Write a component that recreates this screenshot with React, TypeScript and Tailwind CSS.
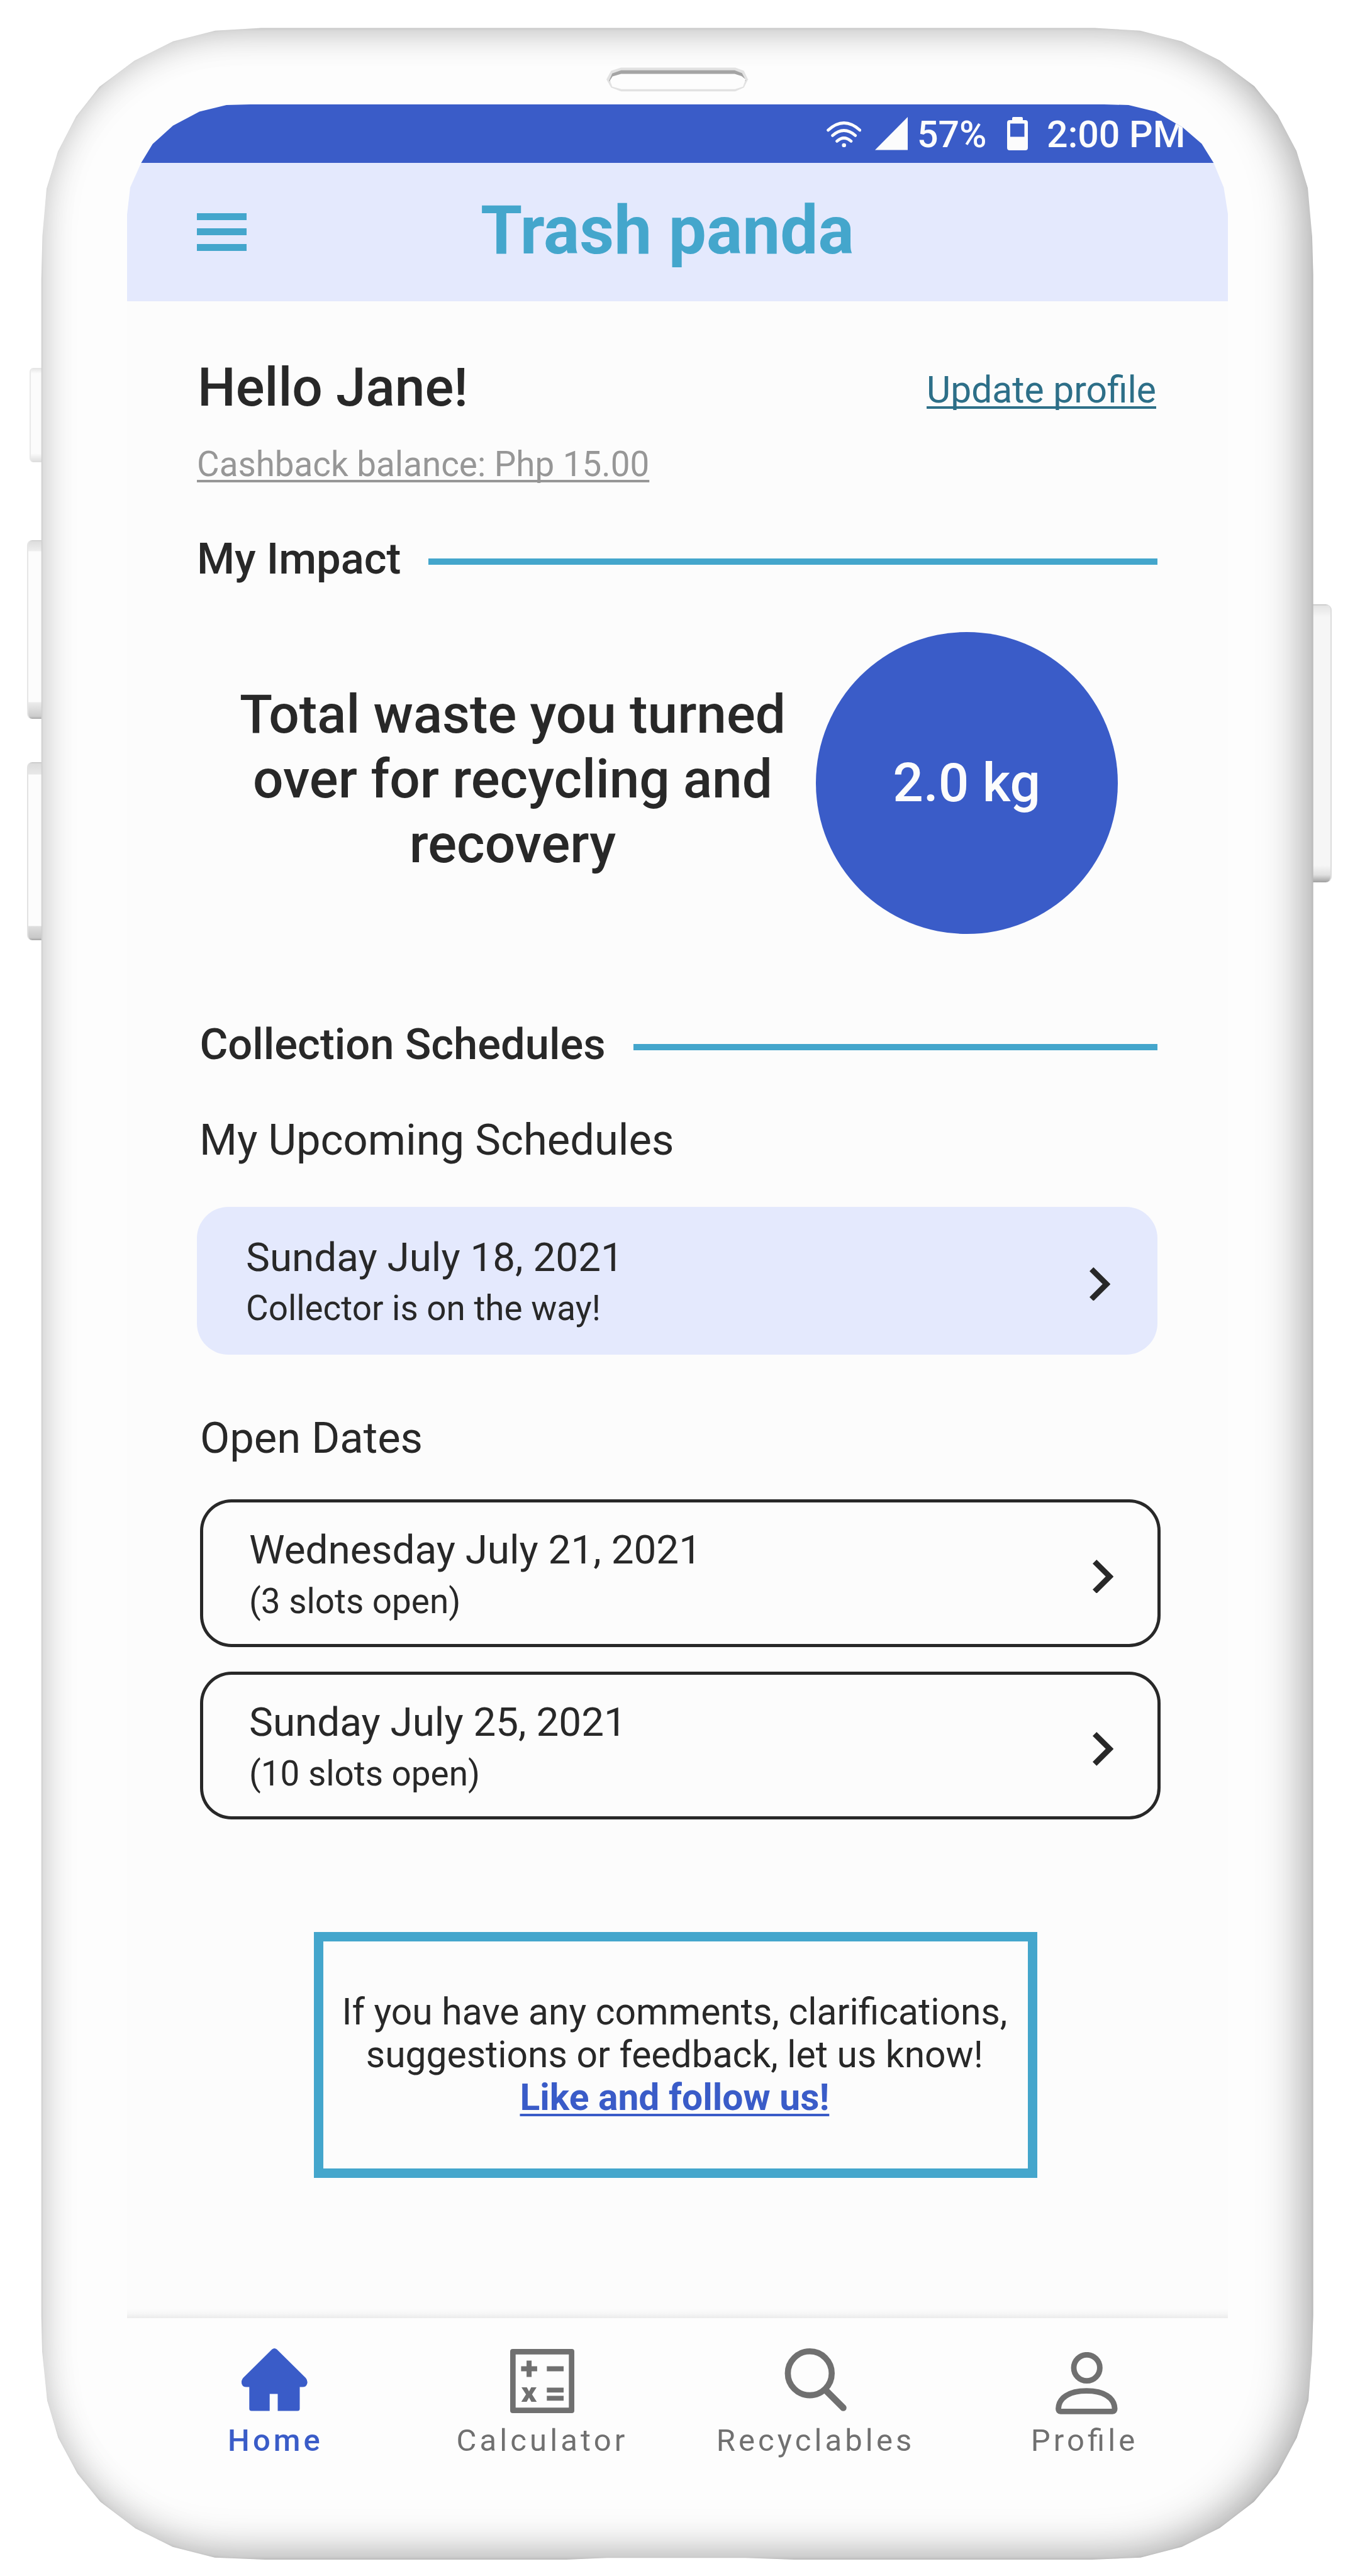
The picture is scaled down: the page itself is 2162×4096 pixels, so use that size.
import React from "react";

function Chevron() {
  return (
    <svg viewBox="542 577 143 230" className="mt-[95.7px] h-[53.7px] w-[33.4px] shrink-0 fill-[#282828]">
      <path d="M569 577 685 692 569 807 542 780 631 692 542 604Z" />
    </svg>
  );
}

function DateCard({ date, note, filled = false }: { date: string; note: string; filled?: boolean }) {
  return (
    <div
      className={
        "flex h-[235px] w-[1527px] items-start justify-between rounded-[50px] pr-[75px] pl-[78px] " +
        (filled ? "bg-[#e4e9fd]" : "ml-[5px] shadow-[inset_0_0_0_5px_#282828]")
      }
    >
      <div className="mt-[40px]">
        <div className="text-[63.8px] leading-[81.5px]">{date}</div>
        <div className="text-[54.8px] leading-[81.5px]">{note}</div>
      </div>
      <Chevron />
    </div>
  );
}

function SectionTitle({ children }: { children: string }) {
  return (
    <div className="flex items-start">
      <h2 className="text-[68.7px] leading-[70px] font-medium whitespace-nowrap">{children}</h2>
      <div className="mt-[34px] ml-[44px] h-[10px] grow bg-[#44a6cc]" />
    </div>
  );
}

function StatusBar() {
  return (
    <div className="flex h-[93px] items-start justify-end bg-[#3a5cc8] pr-[67.5px] text-[59.1px] leading-[60px] font-medium text-[#fcfcfc]">
      <svg viewBox="0 0 55.4 41.5" className="mt-[26.5px] h-[41.5px] w-[55.4px]" fill="none" stroke="currentColor" strokeWidth="4.6" strokeLinecap="round">
        <path d="M2.5 14Q27.6-9 53 14M9.5 22.5Q27.6 6.5 45.8 22.5M16.5 31.5Q27.6 21.5 39 31.5" />
        <circle cx="27.7" cy="38" r="3.3" fill="currentColor" stroke="none" />
      </svg>
      <svg viewBox="0 0 52 52.5" className="mt-[20.4px] ml-[22.4px] h-[52.5px] w-[52px] fill-current">
        <path d="M52 0V52.5H0Z" />
      </svg>
      <span className="mt-[18.4px] ml-[14.5px]">57%</span>
      <svg viewBox="0 0 33 53" className="mt-[20.4px] ml-[32.5px] h-[53px] w-[33px] fill-current" fillRule="evenodd">
        <path d="M8 2Q8 0 10 0H23Q25 0 25 2V5H29Q33 5 33 9V49Q33 53 29 53H4Q0 53 0 49V9Q0 5 4 5H8ZM5 10.5V31.5H27.5V10.5Z" />
      </svg>
      <span className="mt-[18.4px] ml-[30px] whitespace-nowrap">2:00 PM</span>
    </div>
  );
}

function Header() {
  return (
    <header className="flex h-[220px] items-start bg-[#e4e9fd] text-[#44a6cc]">
      <button className="mt-[80px] ml-[111.3px] flex w-[78.6px] flex-col gap-[13.4px]">
        <span className="h-[11px] w-full bg-[#44a6cc]" />
        <span className="h-[11px] w-full bg-[#44a6cc]" />
        <span className="h-[11px] w-full bg-[#44a6cc]" />
      </button>
      <h1 className="mt-[48.4px] ml-[372px] text-[107px] leading-[120px] font-bold">Trash panda</h1>
    </header>
  );
}

function NavItem({
  label,
  icon,
  className,
}: {
  label: string;
  icon: React.ReactNode;
  className: string;
}) {
  return (
    <div className={"flex flex-col items-center " + className}>
      <div className="h-[105px]">{icon}</div>
      <div className="mt-[11.5px] text-[49px] leading-[60px] tracking-[5.1px] [font-feature-settings:'liga'_1]">{label}</div>
    </div>
  );
}

const HomeIcon = (
  <svg viewBox="0 0 105 105" className="mr-[4px] size-[105px] fill-current">
    <path d="M48.5 1.5Q52.2-1.5 56 1.5L102 47Q106 52 104 57Q102.500 61.500 97 61.500H92.500V96Q92.500 99.500 89 99.500H57.500V72.500H44.700V99.500H16Q12.300 99.500 12.300 96V61.500H7.500Q2 61.500.5 57Q-1.500 52 2.500 47Z" />
  </svg>
);

const CalculatorIcon = (
  <svg viewBox="0 0 102 102" className="mt-[0.800px] size-[102px] fill-current">
    <path fillRule="evenodd" d="M4 0H98Q102 0 102 4V98Q102 102 98 102H4Q0 102 0 98V4Q0 0 4 0ZM8.700 8.700V93.300H93.300V8.700Z" />
    <path d="M26.100 18.600H34.100V27.500H42.900V35.500H34.100V44.500H26.100V35.500H17.400V27.500H26.100ZM58.300 27.400H85V35.400H58.300ZM58.300 61.500H85V69.300H58.300ZM58.300 74.400H85V82.200H58.300Z" />
    <path d="M18 61H26.500L30 67.500 33.500 61H42L34.800 72.300 42.300 84H33.700L30 77.200 26.300 84H17.700L25.200 72.300Z" />
  </svg>
);

const SearchIcon = (
  <svg viewBox="0 0 100 105" className="h-[105px] w-[100px] fill-none stroke-current">
    <circle cx="40.300" cy="39.700" r="34.900" strokeWidth="9.600" />
    <path d="M66 67 93.500 94.500" strokeWidth="10.500" strokeLinecap="round" />
  </svg>
);

const ProfileIcon = (
  <svg viewBox="0 0 99 100" className="mt-[5.300px] ml-[6px] h-[100px] w-[99px] fill-none stroke-current" strokeWidth="8.800">
    <circle cx="49.700" cy="25" r="20.700" />
    <path d="M4.500 90C5 73 21 61.700 49.300 61.700S93.600 73 94.100 90Q94.100 94.400 90.500 94.400H8Q4.500 94.400 4.500 90Z" />
  </svg>
);

/* Bezel, speaker slot and hardware keys behind the screen */
function PhoneShell() {
  return (
    <>
      <div className="absolute top-[585px] left-[47px] h-[150px] w-[24px] rounded-l-[6px] border-l-2 border-[#e9e9e9] bg-[linear-gradient(#e4e4e4,#fbfbfb_9px,#fbfbfb_136px,#dcdcdc)]" />
      <div className="absolute top-[859px] left-[42.700px] h-[284px] w-[28px] rounded-l-[8px] border-l-2 border-[#e6e6e6] bg-[linear-gradient(#c4c4c4,#dedede_2px,#eeeeee_17px,#fcfcfc_18px,#fcfcfc_257px,#ececec_258px,#cccccc_280px,#a8a8a8)]" />
      <div className="absolute top-[1211.500px] left-[43px] h-[283px] w-[28px] rounded-l-[8px] border-l-2 border-[#e2e2e2] bg-[linear-gradient(#b8b8b8,#dcdcdc_2px,#e8e8e8_19px,#fcfcfc_20px,#fcfcfc_260px,#dedede_261px,#c8c8c8_279px,#a4a4a4)]" />
      <div className="absolute top-[961.400px] left-[2080px] h-[442px] w-[36.500px] rounded-r-[9px] border-r-2 border-[#dcdcdc] bg-[linear-gradient(#b4b4b4,#e4e4e4_2px,#f6f6f6_20px,#f6f6f6_415px,#e0e0e0_430px,#a0a0a0)]" />
      <div className="absolute top-[44px] left-[65px] h-[4026px] w-[2023px] [clip-path:polygon(350px_0.5px,277px_4.8px,210px_21.7px,148.6px_52.5px,93px_94px,56px_141px,27px_197px,9px_256px,2.5px_330px,0.7px_400px,0.7px_3640px,2px_3695px,10px_3773px,27.4px_3832px,58px_3889px,94.4px_3934px,150.6px_3976.5px,209.6px_4005.7px,276.5px_4022.8px,357px_4026px,835px_4026px,900px_4023.2px,1120px_4023.2px,1198px_4026px,1670px_4026px,1748px_4022.8px,1813.6px_4005.7px,1874px_3975.7px,1928.5px_3934px,1965.4px_3890px,1996.6px_3832px,2015px_3773px,2020.7px_3699px,2022.6px_3638px,2022.6px_392px,2021px_333px,2014px_255px,1996px_196px,1966px_139px,1929px_93px,1874px_52px,1813.7px_21.7px,1747.5px_4.8px,1675.5px_0.5px)]">
        <div className="h-full w-full rounded-[318px] bg-[#fdfdfd] shadow-[inset_0_0_5px_rgba(0,0,0,0.16),inset_0_0_60px_rgba(0,0,0,0.18),inset_-22px_-10px_70px_rgba(0,0,0,0.22)]" />
      </div>
      <svg viewBox="80 68 970 168" className="absolute top-[106.900px] left-[963.700px] h-[39.200px] w-[226px]">
        <path fill="#e2e2e2" d="M180 70H960L1018 92 1046 150 1018 206 960 232H180L112 206 80 150 112 92Z" />
        <path fill="#a4a4a4" d="M180 88H955L1005 108 1032 158 960 200H180L98 160 120 110Z" />
        <path fill="#fdfdfd" d="M180 113H955L1002 128 1030 150 1012 200 958 217H182L120 200 104 158 122 130Z" />
      </svg>
    </>
  );
}

export default function App() {
  return (
    <div className="relative flex h-[4096px] w-[2162px] items-start overflow-hidden bg-white font-['Roboto',sans-serif] text-[#282828]">
      <PhoneShell />
      <div className="relative mt-[166px] ml-[202px] flex w-[1750px] flex-col">
        <div className="[clip-path:polygon(196px_0,1553px_0,1592px_1px,1635px_11.6px,1678.400px_36.800px,1708.300px_62.500px,1727.300px_93px,1743.400px_132px,1750px_174px,1750px_100%,0_100%,0_175px,5px_132px,22.400px_93px,40.600px_63px,73px_33.700px,115px_11.600px,158px_1px)]">
          <StatusBar />
          <Header />
        </div>

        <main className="flex flex-col bg-[#fcfcfc] pr-[112px] pl-[111px]">
          <div className="mt-[86.600px] flex items-start justify-between pr-[2px] pl-[1px]">
            <div className="text-[85.600px] leading-[100px] font-medium">Hello Jane!</div>
            <a className="mt-[4px] text-[58.750px] leading-[100px] text-[#2d6f88] underline decoration-[3.500px] underline-offset-[6px] [text-decoration-skip-ink:none]">Update profile</a>
          </div>
          <div className="mt-[38.500px] text-[54.760px] leading-[60px] text-[#979797]">
            <span className="underline decoration-[3.500px] underline-offset-[5.500px] [text-decoration-skip-ink:none]">Cashback balance: Php 15.00</span>
          </div>

          <div className="mt-[85.800px]">
            <SectionTitle>My Impact</SectionTitle>
          </div>
          <div className="mt-[81px] flex items-start pl-[67px]">
            <p className="mt-[80px] w-[870px] text-center text-[85.500px] leading-[102.900px] font-medium">
              Total waste you turned
              <br />
              over for recycling and
              <br />
              recovery
            </p>
            <div className="ml-[46.700px] flex size-[480px] shrink-0 items-center justify-center rounded-full bg-[#3a5cc8] text-[85.600px] leading-[100px] font-medium text-[#fcfcfc]">2.0 kg</div>
          </div>

          <div className="mt-[140.700px] pl-[4.500px]">
            <SectionTitle>Collection Schedules</SectionTitle>
          </div>
          <h3 className="mt-[82.300px] pl-[4px] text-[68.700px] leading-[70px]">My Upcoming Schedules</h3>
          <div className="mt-[71px]">
            <DateCard filled date="Sunday July 18, 2021" note="Collector is on the way!" />
          </div>
          <h3 className="mt-[98.400px] pl-[5px] text-[68.700px] leading-[70px]">Open Dates</h3>
          <div className="mt-[61.800px] flex flex-col gap-[39.200px]">
            <DateCard date="Wednesday July 21, 2021" note="(3 slots open)" />
            <DateCard date="Sunday July 25, 2021" note="(10 slots open)" />
          </div>

          <div className="mt-[178.800px] ml-[185.900px] h-[390.500px] w-[1150px] border-[15px] border-[#44a6cc] pt-[77.700px] pr-[3px] text-center text-[58.770px] leading-[68.200px] whitespace-nowrap">
            If you have any comments, clarifications,
            <br />
            suggestions or feedback, let us know!
            <br />
            <a className="font-bold text-[#3a5cc8] underline decoration-[3.500px] underline-offset-[6px] [text-decoration-skip-ink:none]">Like and follow us!</a>
          </div>
          <div className="h-[208.500px]" />
        </main>

        <div className="h-[15px] bg-[linear-gradient(#fcfcfc,#f6f6f6_8px,#ebebeb)]" />
        <nav className="flex items-start pt-[48.400px] pl-[21px] text-[#707070]">
          <NavItem label="Home" icon={HomeIcon} className="w-[430px] font-medium text-[#3a5cc8]" />
          <NavItem label="Calculator" icon={CalculatorIcon} className="w-[418px]" />
          <NavItem label="Recyclables" icon={SearchIcon} className="w-[451px]" />
          <NavItem label="Profile" icon={ProfileIcon} className="w-[404px]" />
        </nav>
      </div>
    </div>
  );
}
